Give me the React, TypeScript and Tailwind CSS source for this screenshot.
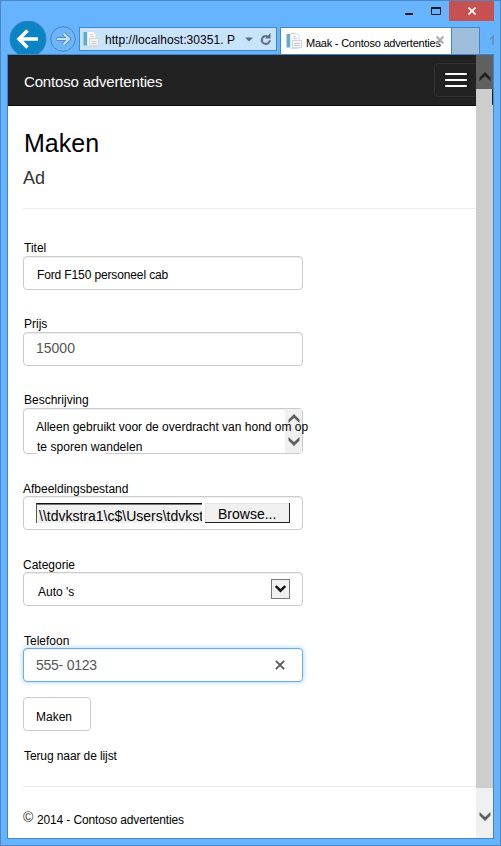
import type { ReactNode } from "react";

function PageIcon() {
  return (
    <svg width="16" height="16" viewBox="0 0 16 16" className="shrink-0">
      <path d="M4.500.5h6l2.500 2.500v12.500h-8.500z" fill="#fafafa" stroke="#d8dbde" />
      <path d="M7 3.500h3M7 5.500h4" stroke="#ccd1d6" />
      <rect x="0.500" y="1" width="3.500" height="13.500" fill="#62abd0" />
      <path d="M4.500 1v13.500" stroke="#e0e9ee" />
      <rect x="6.500" y="7.500" width="9" height="7" fill="#f1f2f3" stroke="#d6d9dc" />
      <path d="M8.500 10.500h5M8.500 12.500h5" stroke="#c3c9cf" />
    </svg>
  );
}

function Chevron({ up = false, color = "#5f5f5f" }: { up?: boolean; color?: string }) {
  return (
    <svg width="12" height="9" viewBox="0 0 12 9" className={up ? "shrink-0 rotate-180" : "shrink-0"}>
      <path d="M.5 0L6 5 11.500 0v3.500L6 9 .5 3.500z" fill={color} />
    </svg>
  );
}

function Field({ label, low, inset, children }: { label: string; low?: boolean; inset?: boolean; children: ReactNode }) {
  return (
    <div>
      <div className={`h-4 text-xs ${low ? "leading-[18px]" : "leading-4"} ${inset ? "pl-px" : ""}`}>{label}</div>
      {children}
    </div>
  );
}

const box = "w-[280px] rounded border border-[#ccc] bg-white shadow-[inset_0_1px_1px_rgba(0,0,0,0.075)]";

function WindowChrome() {
  return (
    <header className="h-[53px]">
      <div className="flex h-5 justify-end pr-[6px]">
        <svg width="45" height="20" viewBox="0 0 45 20">
          <path d="M1 13h8" stroke="#1b1b1b" strokeWidth="2" />
          <path d="M27.500 7.500h9v6h-9z" fill="none" stroke="#1b1b1b" />
          <path d="M27 7h10" stroke="#1b1b1b" strokeWidth="2" />
        </svg>
        <div className="flex w-[45px] items-center justify-center bg-[#c75050]">
          <svg width="8" height="8" viewBox="0 0 8 8">
            <path d="M.5.5l7 7M7.500.5l-7 7" stroke="#fff" strokeWidth="1.700" />
          </svg>
        </div>
      </div>
      <div className="flex h-[33px] overflow-hidden pl-2">
        <svg width="38" height="33" viewBox="0 0 38 33" className="shrink-0">
          <circle cx="19" cy="18" r="18" fill="#0a84c4" stroke="#3f7fb5" />
          <path d="M10 18h19M18.500 9.500L10 18l8.500 8.500" fill="none" stroke="#fff" strokeWidth="3.500" />
        </svg>
        <svg width="26" height="33" viewBox="0 0 26 33" className="ml-[3px] shrink-0">
          <circle cx="13" cy="18" r="12.300" fill="#6db5f6" stroke="#4388c6" />
          <path d="M6.500 18h12M13.500 12.500L19 18l-5.500 5.500" fill="none" stroke="#4a90cf" strokeWidth="4" />
          <path d="M7 18h11M13.500 12.500L19 18l-5.500 5.500" fill="none" stroke="#c7e3fc" strokeWidth="2.200" />
        </svg>
        <div className="mt-[6px] ml-[3px] flex h-6 w-[198px] shrink-0 items-center border border-[#4388c6] bg-[#c8e3fd] pl-[3px]">
          <PageIcon />
          <span className="mt-0.5 ml-[6px] w-[140px] text-xs leading-4 tracking-[0.05px] whitespace-pre">http://localhost:30351. P</span>
          <svg width="8" height="5" viewBox="0 0 8 5">
            <path d="M0 .5h8L4 4.500z" fill="#5d6f80" />
          </svg>
          <svg width="12" height="13" viewBox="0 0 12 13" className="ml-[7px]">
            <path d="M9.800 7.200A4 4 0 1 1 7.500 3.300" fill="none" stroke="#5d6f80" strokeWidth="2" />
            <path d="M10.500 0v5.500H5z" fill="#5d6f80" />
          </svg>
        </div>
        <div className="mt-[6px] ml-[3px] flex h-[27px] w-[172px] shrink-0 items-center border border-b-0 border-[#4388c6] bg-white pl-[5px]">
          <PageIcon />
          <span className="mt-[3px] ml-1 w-[130px] text-[11px] leading-4 tracking-[-0.22px] whitespace-nowrap">Maak - Contoso advertenties</span>
          <svg width="8" height="8" viewBox="0 0 8 8" className="-mt-[2px] shrink-0">
            <path d="M.5.5l7 7M7.500.5l-7 7" stroke="#a5a5a5" strokeWidth="1.900" />
          </svg>
        </div>
        <div className="mt-[6px] h-[27px] w-[28px] shrink-0 border-t border-r border-[#4388c6] bg-[#9dbfdc]" />
        <svg width="4" height="10" viewBox="0 0 4 10" className="mt-[14px] ml-[10px] shrink-0">
          <path d="M0 4.500l4-4M3 1.500v8.500" fill="none" stroke="#6b89a6" strokeWidth="1.300" />
        </svg>
      </div>
    </header>
  );
}

function ScrollBar() {
  return (
    <div className="absolute inset-y-0 right-0 flex w-[17px] flex-col">
      <div className="flex h-[34px] items-center justify-center bg-[#606060] pt-[9px]">
        <Chevron up color="#222" />
      </div>
      <div className="mr-px h-4 shrink-0 bg-[#cdcdcd]" />
      <div className="flex-1 bg-[#cdcdcd]" />
      <div className="flex h-[50px] justify-center bg-[#f0f0f0] pt-6">
        <Chevron />
      </div>
    </div>
  );
}

export default function App() {
  return (
    <div className="h-[846px] w-[501px] overflow-hidden border border-[#4a88bf] bg-[#66b3ff] font-['Liberation_Sans',Arial,sans-serif] text-black">
      <WindowChrome />
      <div className="relative ml-[6px] h-[785px] w-[487px] border border-[#4388c6] bg-white">
        <nav className="flex h-[51px] justify-between border-b border-[#080808] bg-[#222] pr-[15px] pl-4">
          <span className="mt-[18px] text-[15px] leading-[17px] tracking-[-0.17px] text-white">Contoso advertenties</span>
          <div className="mt-2 flex h-[34px] w-11 flex-col items-center justify-center gap-1 rounded border border-[#333]">
            <div className="h-0.5 w-[22px] rounded-[1px] bg-white" />
            <div className="h-0.5 w-[22px] rounded-[1px] bg-white" />
            <div className="h-0.5 w-[22px] rounded-[1px] bg-white" />
          </div>
        </nav>
        <main className="pl-[15px] pt-[23px]">
          <h1 className="pl-px text-[25px] leading-7">Maken</h1>
          <h2 className="mt-[11px] text-lg leading-5 text-[#333]">Ad</h2>
          <div className="mt-5 h-px bg-[#eee]" />
          <form className="mt-[31px] flex flex-col gap-[26px]">
            <Field label="Titel" inset>
              <div className={`${box} h-[34px] pt-[10px] pl-[13px] text-xs leading-4 tracking-[-0.13px]`}>Ford F150 personeel cab</div>
            </Field>
            <Field label="Prijs" inset>
              <div className={`${box} h-[34px] pt-[7px] pl-3 text-sm leading-4 text-[#555]`}>15000</div>
            </Field>
            <Field label="Beschrijving" inset>
              <div className={`${box} relative h-[46px] pt-2 pl-3 text-xs leading-5 whitespace-nowrap`}>
                <div className="absolute inset-y-0 right-0 flex w-[17px] flex-col items-center justify-between bg-[#f0f0f0] pt-[5px] pb-[7px]">
                  <Chevron up />
                  <Chevron />
                </div>
                <div className="absolute -bottom-px left-[13px] h-px w-[69px] bg-white" />
                <div className="relative">Alleen gebruikt voor de overdracht van hond om op</div>
                <div className="relative pl-px tracking-[0.04px]">te sporen wandelen</div>
              </div>
            </Field>
            <Field label="Afbeeldingsbestand" low>
              <div className={`${box} flex h-[34px] gap-[3px] pt-[6px] pl-3`}>
                <div className="h-5 w-[166px] overflow-hidden border-t border-l border-t-[#111] border-l-[#555] bg-[#f0f0f0] pt-1 pl-[2px] text-sm leading-4 whitespace-nowrap shadow-[inset_0_1px_0_#777]">
                  {"\\\\tdvkstra1\\c$\\Users\\tdvkst"}
                </div>
                <div className="h-5 w-[85px] border-r border-b border-[#222] bg-[#f0f0f0] pt-[3px] pl-[13px] text-sm leading-4 shadow-[inset_1px_1px_0_#e3e3e3]">Browse...</div>
              </div>
            </Field>
            <Field label="Categorie" low>
              <div className={`${box} flex h-[34px] justify-between pr-3 pl-[14px]`}>
                <span className="mt-[11px] text-xs leading-4">Auto 's</span>
                <div className="mt-[6px] flex h-5 w-[19px] items-center justify-center border border-[#777] bg-[#f0f0f0]">
                  <svg width="11" height="8" viewBox="0 0 11 8">
                    <path d="M.8 1l4.700 4.700L10.200 1" fill="none" stroke="#111" strokeWidth="2.400" />
                  </svg>
                </div>
              </div>
            </Field>
            <Field label="Telefoon" low inset>
              <div className="flex h-[34px] w-[280px] justify-between rounded border border-[#66afe9] bg-white pr-[17px] pl-3 shadow-[inset_0_1px_1px_rgba(0,0,0,0.075),0_0_5px_rgba(102,175,233,0.6)]">
                <span className="mt-2 text-sm leading-4 tracking-[-0.25px] text-[#555]">555- 0123</span>
                <svg width="10" height="10" viewBox="0 0 10 10" className="mt-[11px]">
                  <path d="M.8.8l8.400 8.400M9.200.8L.8 9.200" stroke="#5a5a5a" strokeWidth="1.900" />
                </svg>
              </div>
            </Field>
          </form>
          <div className="mt-[15px] h-[34px] w-[68px] rounded border border-[#ccc] pt-[11px] pl-3 text-xs leading-4">Maken</div>
          <div className="mt-[17px] pl-px text-xs leading-4 tracking-[-0.1px]">Terug naar de lijst</div>
          <div className="mt-[22px] h-px bg-[#eee]" />
          <footer className="mt-[22px] flex">
            <span className="w-[14px] text-sm leading-4 text-[#333]">©</span>
            <span className="mt-[3px] text-xs leading-4 tracking-[-0.14px]">2014 - Contoso advertenties</span>
          </footer>
        </main>
        <ScrollBar />
      </div>
    </div>
  );
}
